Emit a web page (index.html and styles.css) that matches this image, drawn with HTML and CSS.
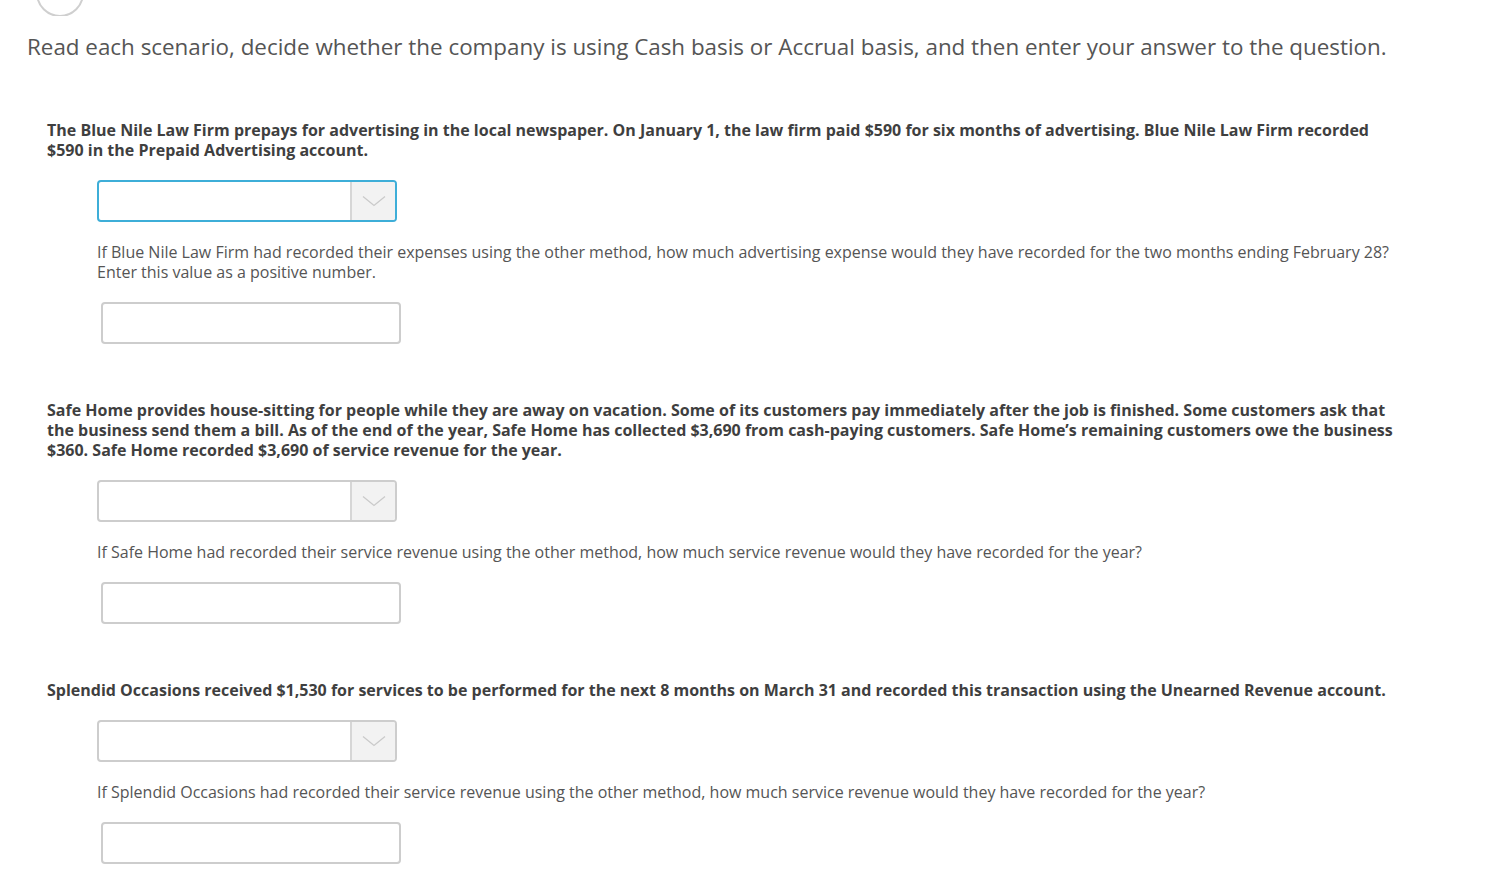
FILE: index.html
```html
<!DOCTYPE html>
<html>
<head>
<meta charset="utf-8">
<link rel="stylesheet" href="styles.css">
</head>
<body>
<div class="page">
  <div class="circle-clip"><div class="circle"></div></div>
  <p class="intro">Read each scenario, decide whether the company is using Cash basis or Accrual basis, and then enter your answer to the question.</p>

  <section class="scenario">
    <p class="prompt">The Blue Nile Law Firm prepays for advertising in the local newspaper. On January 1, the law firm paid $590 for six months of advertising. Blue Nile Law Firm recorded $590 in the Prepaid Advertising account.</p>
    <div class="answers">
      <div class="select focused"><span class="select-value"></span><span class="select-arrow"><svg width="24" height="12" viewBox="0 0 24 12"><path d="M1 1.5 L12 10.5 L23 1.5" fill="none" stroke="#cacaca" stroke-width="1.3"/></svg></span></div>
      <p class="question">If Blue Nile Law Firm had recorded their expenses using the other method, how much advertising expense would they have recorded for the two months ending February 28?<br>Enter this value as a positive number.</p>
      <div class="text-input"></div>
    </div>
  </section>

  <section class="scenario">
    <p class="prompt">Safe Home provides house-sitting for people while they are away on vacation. Some of its customers pay immediately after the job is finished. Some customers ask that the business send them a bill. As of the end of the year, Safe Home has collected $3,690 from cash-paying customers. Safe Home’s remaining customers owe the business $360. Safe Home recorded $3,690 of service revenue for the year.</p>
    <div class="answers">
      <div class="select"><span class="select-value"></span><span class="select-arrow"><svg width="24" height="12" viewBox="0 0 24 12"><path d="M1 1.5 L12 10.5 L23 1.5" fill="none" stroke="#cacaca" stroke-width="1.3"/></svg></span></div>
      <p class="question">If Safe Home had recorded their service revenue using the other method, how much service revenue would they have recorded for the year?</p>
      <div class="text-input"></div>
    </div>
  </section>

  <section class="scenario">
    <p class="prompt">Splendid Occasions received $1,530 for services to be performed for the next 8 months on March 31 and recorded this transaction using the Unearned Revenue account.</p>
    <div class="answers">
      <div class="select"><span class="select-value"></span><span class="select-arrow"><svg width="24" height="12" viewBox="0 0 24 12"><path d="M1 1.5 L12 10.5 L23 1.5" fill="none" stroke="#cacaca" stroke-width="1.3"/></svg></span></div>
      <p class="question">If Splendid Occasions had recorded their service revenue using the other method, how much service revenue would they have recorded for the year?</p>
      <div class="text-input"></div>
    </div>
  </section>
</div>
</body>
</html>
```

FILE: styles.css
```css
html, body {
  margin: 0;
  padding: 0;
  background: #fff;
}
body {
  font-family: "Open Sans", "Liberation Sans", sans-serif;
  color: #555;
}
.page {
  display: flex;
  flex-direction: column;
}
.circle-clip {
  height: 16px;
  overflow: hidden;
  padding-left: 36px;
}
.circle {
  width: 44px;
  height: 44px;
  margin-top: -31px;
  border: 2px solid #cfcfcf;
  border-radius: 50%;
}
.intro {
  margin: 16px 0 0 27px;
  font-size: 22.4px;
  line-height: 30px;
  color: #555;
}
.scenario {
  display: flex;
  flex-direction: column;
  padding-left: 47px;
  margin-top: 56px;
}
.scenario:first-of-type {
  margin-top: 58px;
}
.prompt {
  margin: 0;
  width: 1360px;
  font-size: 16px;
  font-weight: 700;
  line-height: 20px;
  color: #3f3f3f;
}
.answers {
  display: flex;
  flex-direction: column;
  gap: 20px;
  padding-left: 50px;
  margin-top: 20px;
}
.select {
  box-sizing: border-box;
  width: 300px;
  height: 42px;
  border: 2px solid #cdcdcd;
  border-radius: 4px;
  display: flex;
  overflow: hidden;
  background: #fff;
}
.select.focused {
  border-color: #3eaed8;
}
.select-value {
  flex: 1;
}
.select-arrow {
  flex: 0 0 45px;
  box-sizing: border-box;
  background: #f2f2f2;
  border-left: 2px solid #d6d6d6;
  display: flex;
  align-items: center;
  justify-content: center;
}
.question {
  margin: 0;
  font-size: 16px;
  line-height: 20px;
  color: #555;
}
.text-input {
  box-sizing: border-box;
  width: 300px;
  height: 42px;
  margin-left: 4px;
  border: 2px solid #cdcdcd;
  border-radius: 4px;
  background: #fff;
}
```
